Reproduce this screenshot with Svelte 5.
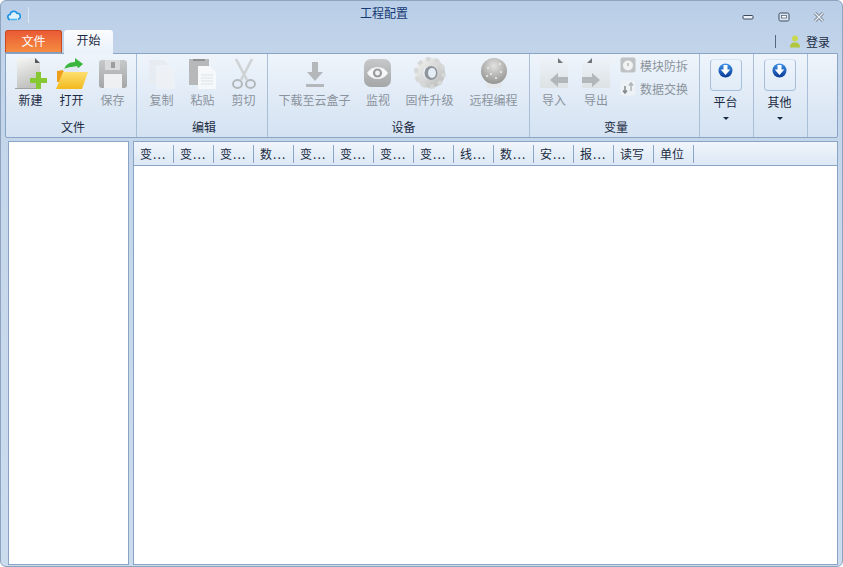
<script>
  const columns = [
    { name: '变', cut: true },
    { name: '变', cut: true },
    { name: '变', cut: true },
    { name: '数', cut: true },
    { name: '变', cut: true },
    { name: '变', cut: true },
    { name: '变', cut: true },
    { name: '变', cut: true },
    { name: '线', cut: true },
    { name: '数', cut: true },
    { name: '安', cut: true },
    { name: '报', cut: true },
    { name: '读写', cut: false },
    { name: '单位', cut: false }
  ]
</script>

<svg class="defs" width="0" height="0" aria-hidden="true">
  <defs>
    <linearGradient id="paper" x1="0" y1="0" x2="0.3" y2="1">
      <stop offset="0" stop-color="#f6f6f5" />
      <stop offset="1" stop-color="#c2c3c1" />
    </linearGradient>
    <linearGradient id="paperFaint" x1="0" y1="0" x2="0" y2="1">
      <stop offset="0" stop-color="#eef3f9" />
      <stop offset="1" stop-color="#dde2e4" />
    </linearGradient>
    <linearGradient id="folder" x1="0" y1="0" x2="0" y2="1">
      <stop offset="0" stop-color="#fde070" />
      <stop offset="1" stop-color="#f2b91e" />
    </linearGradient>
    <linearGradient id="grey" x1="0" y1="0" x2="0" y2="1">
      <stop offset="0" stop-color="#c6c8ca" />
      <stop offset="1" stop-color="#a4a6a8" />
    </linearGradient>
    <radialGradient id="ball" cx="0.5" cy="0.3" r="0.75">
      <stop offset="0" stop-color="#e2e2e0" />
      <stop offset="1" stop-color="#8d8d8b" />
    </radialGradient>
    <linearGradient id="gear" x1="0" y1="0" x2="1" y2="1">
      <stop offset="0" stop-color="#eeeeec" />
      <stop offset="1" stop-color="#bfc1c1" />
    </linearGradient>
    <linearGradient id="roundBlue" x1="0" y1="0" x2="0" y2="1">
      <stop offset="0" stop-color="#3f93ea" />
      <stop offset="1" stop-color="#0a3a94" />
    </linearGradient>
  </defs>
</svg>

{#snippet sheet(arrow)}
  <svg width="30" height="34" viewBox="0 0 30 34">
    {#if arrow === 'left'}
      <path d="M1 1h18l10 6v24H1z" fill="url(#paperFaint)" />
      <path d="M19 1l5 5h-5z" fill="#73777b" />
      <path d="M11 23l8-7v4h10v6H19v4z" fill="#b3b7b9" />
    {:else}
      <path d="M29 1H11L1 7v24h28z" fill="url(#paperFaint)" />
      <path d="M11 1L6 6h5z" fill="#73777b" />
      <path d="M19 23l-8-7v4H1v6h10v4z" fill="#b3b7b9" />
    {/if}
  </svg>
{/snippet}

{#snippet roundArrow()}
  <svg width="15" height="15" viewBox="0 0 15 15">
    <circle cx="7.5" cy="7.5" r="7" fill="url(#roundBlue)" />
    <path d="M5.500 2h4v4.500h2.800l-4.800 5.500-4.800-5.500h2.800z" fill="#fff" />
  </svg>
{/snippet}

<div class="window">
  <header class="titlebar">
    <div class="title-left">
      <svg width="14" height="12" viewBox="0 0 14 12">
        <path d="M3.500 10.500a2.500 2.500 0 0 1-.3-5 3.600 3.600 0 0 1 6.800-1.200 3 3 0 0 1 1 5.900" fill="#dff1fb" stroke="#1c93e0" stroke-width="1.600" />
        <path d="M4 10.500h6" stroke="#47b5ee" stroke-width="1.600" />
      </svg>
      <span class="title-sep"></span>
    </div>
    <div class="title">工程配置</div>
    <div class="controls">
      <svg width="12" height="8" viewBox="0 0 12 8"><rect x="1" y="2.500" width="10" height="3.500" rx="1" fill="#eef3f9" stroke="#3c4a5c" /></svg>
      <svg width="12" height="10" viewBox="0 0 12 10"><rect x="1" y="1" width="10" height="8" rx="1.500" fill="#d9e5f2" stroke="#3c4a5c" /><rect x="3.500" y="3.500" width="5" height="2.500" fill="#fff" stroke="#5b6a7c" stroke-width=".8" /></svg>
      <svg class="close" width="12" height="10" viewBox="0 0 12 10"><path d="M2 1l8 8M10 1L2 9" stroke="#6f7b89" stroke-width="3" /><path d="M2 1l8 8M10 1L2 9" stroke="#eef3f8" stroke-width="1.300" /></svg>
    </div>
  </header>

  <div class="tabs">
    <div class="tab-file">文件</div>
    <div class="tab-start">开始</div>
    <div class="login">
      <span class="login-sep"></span>
      <svg width="12" height="13" viewBox="0 0 12 13">
        <circle cx="6" cy="3.600" r="3" fill="#c9d852" />
        <path d="M1 12.500c0-4 2.200-5 5-5s5 1 5 5z" fill="#b2c63c" />
      </svg>
      <span>登录</span>
    </div>
  </div>

  <section class="ribbon">
    <div class="group g-file">
      <div class="items">
        <div class="btn">
          <svg width="34" height="34" viewBox="0 0 34 34">
            <path d="M3 1h18l5 5v25H3z" fill="url(#paper)" />
            <path d="M21 1l5 5h-5z" fill="#55585c" />
            <path d="M1 31h26v1H1z" fill="#a2a4a2" />
            <path d="M16 21h6v-6h5v6h6v5h-6v6h-5v-6h-6z" fill="#86c832" />
          </svg>
          <span>新建</span>
        </div>
        <div class="btn">
          <svg width="34" height="34" viewBox="0 0 34 34">
            <path d="M9 13c1-5 5-8 11-8V1l8 6-8 7v-4c-4 0-8 0-11 3z" fill="#3ab63c" />
            <path d="M2 14l6-1 2 2v10H2z" fill="#ef9e1c" />
            <path d="M7 12l15-3 3 6H9z" fill="#e3e9f0" />
            <path d="M8 15h25l-6 17H1z" fill="url(#folder)" />
          </svg>
          <span>打开</span>
        </div>
        <div class="btn off">
          <svg width="30" height="34" viewBox="0 0 30 34">
            <rect x="1" y="3" width="28" height="28" rx="3" fill="url(#grey)" />
            <rect x="7" y="3" width="15" height="10" fill="#d8dadb" />
            <rect x="13" y="5" width="4" height="6" fill="#9b9d9f" />
            <rect x="6" y="17" width="18" height="14" fill="#eef0f1" />
          </svg>
          <span>保存</span>
        </div>
      </div>
      <div class="group-name">文件</div>
    </div>

    <div class="group g-edit">
      <div class="items">
        <div class="btn off">
          <svg width="30" height="34" viewBox="0 0 30 34">
            <path d="M2 3h15l4 4v20H2z" fill="#e6ecf2" />
            <path d="M9 8h13l6 6v18H9z" fill="#edf1f6" />
          </svg>
          <span>复制</span>
        </div>
        <div class="btn off">
          <svg width="30" height="34" viewBox="0 0 30 34">
            <path d="M1 2h20v26H1z" fill="#b6b8ba" />
            <path d="M5 2h12v2H5z" fill="#8f9193" />
            <path d="M10 9h12l6 6v17H10z" fill="#f6f8fa" />
            <path d="M13 18h12M13 21h12M13 24h12M13 27h12" stroke="#dfe3e7" />
          </svg>
          <span>粘贴</span>
        </div>
        <div class="btn off">
          <svg width="26" height="34" viewBox="0 0 26 34">
            <path d="M5 2l11 21M21 2L10 23" stroke="#ced2d5" stroke-width="2.600" fill="none" />
            <ellipse cx="6.500" cy="27" rx="4.500" ry="4" fill="none" stroke="#b3b8bb" stroke-width="2" />
            <ellipse cx="19.500" cy="27" rx="4.500" ry="4" fill="none" stroke="#b3b8bb" stroke-width="2" />
          </svg>
          <span>剪切</span>
        </div>
      </div>
      <div class="group-name">编辑</div>
    </div>

    <div class="group g-device">
      <div class="items">
        <div class="btn wide">
          <svg width="20" height="34" viewBox="0 0 20 34">
            <path d="M7 5h6v10h5l-8 9-8-9h5z" fill="#b4b8ba" />
            <rect x="1" y="27" width="18" height="3" fill="#b4b8ba" />
          </svg>
          <span>下载至云盒子</span>
        </div>
        <div class="btn view">
          <svg width="30" height="34" viewBox="0 0 30 34">
            <rect x="1" y="2" width="27" height="28" rx="7" fill="url(#grey)" />
            <path d="M4 16c5-8 16-8 21 0-5 8-16 8-21 0z" fill="#f7f7f7" />
            <circle cx="14.500" cy="16" r="4.600" fill="#9b9c9e" />
            <circle cx="14.500" cy="16" r="2.400" fill="#f2f2f2" />
          </svg>
          <span>监视</span>
        </div>
        <div class="btn firmware">
          <svg width="34" height="34" viewBox="0 0 34 34">
            <circle cx="17" cy="16" r="11" fill="none" stroke="url(#gear)" stroke-width="8" />
            <circle cx="17" cy="16" r="14" fill="none" stroke="#d6d8d8" stroke-width="4" stroke-dasharray="4.400 4.400" />
            <ellipse cx="18" cy="16" rx="6.500" ry="7" fill="#8f959a" />
            <ellipse cx="19" cy="16" rx="4" ry="5" fill="#e4ecf5" />
          </svg>
          <span>固件升级</span>
        </div>
        <div class="btn remote">
          <svg width="28" height="34" viewBox="0 0 28 34">
            <path d="M6 24h16l-1 7H7z" fill="#e4e8ec" />
            <circle cx="14" cy="14" r="13" fill="url(#ball)" />
            <path d="M7 11h2M19 7h2M10 17h2M20 15h2M15 21h2M6 19h2" stroke="#eeeeec" stroke-width="1.400" />
          </svg>
          <span>远程编程</span>
        </div>
      </div>
      <div class="group-name">设备</div>
    </div>

    <div class="group g-var">
      <div class="items">
        <div class="btn off narrow">{@render sheet('left')}<span>导入</span></div>
        <div class="btn off narrow">{@render sheet('right')}<span>导出</span></div>
        <div class="small-col">
          <div class="small">
            <svg width="16" height="16" viewBox="0 0 16 16">
              <rect x="0.500" y="0.500" width="15" height="15" rx="2" fill="#bfc2c4" />
              <circle cx="8" cy="8.500" r="5" fill="#f1f2f2" />
              <path d="M8 6v3" stroke="#9a9c9e" />
            </svg>
            <span>模块防拆</span>
          </div>
          <div class="small">
            <svg width="16" height="16" viewBox="0 0 16 16">
              <rect x="0.500" y="0.500" width="15" height="15" rx="3" fill="#eef2f6" />
              <path d="M5 6v7M3 10.500l2 2.500 2-2.500" stroke="#85888a" stroke-width="1.500" fill="none" />
              <path d="M11 11V3M9 5.500L11 3l2 2.500" stroke="#b2b5b7" stroke-width="1.500" fill="none" />
            </svg>
            <span>数据交换</span>
          </div>
        </div>
      </div>
      <div class="group-name">变量</div>
    </div>

    <div class="group g-drop">
      <div class="drop">
        <div class="drop-icon">{@render roundArrow()}</div>
        <span>平台</span>
        <i class="caret"></i>
      </div>
    </div>

    <div class="group g-drop">
      <div class="drop">
        <div class="drop-icon">{@render roundArrow()}</div>
        <span>其他</span>
        <i class="caret"></i>
      </div>
    </div>
  </section>

  <main class="body">
    <aside class="tree"></aside>
    <div class="grid">
      <div class="grid-head">
        {#each columns as col}
          <div class="col">{col.name}{#if col.cut}<span class="dots">...</span>{/if}</div>
        {/each}
      </div>
    </div>
  </main>
</div>

<style>
  :global(body) {
    margin: 0;
    background: #fff;
  }

  .defs {
    position: absolute;
  }

  .window {
    box-sizing: border-box;
    width: 843px;
    height: 567px;
    display: flex;
    flex-direction: column;
    background: linear-gradient(#b9cee7 0, #c3d5ea 60px, #cbdcef 100%);
    border: 1px solid #8ea3bd;
    border-radius: 6px;
    font-family: "Noto Sans CJK SC", "Liberation Sans", sans-serif;
    font-size: 12px;
    color: #1b2b42;
    overflow: hidden;
  }

  .titlebar {
    height: 28px;
    flex: none;
    display: flex;
    align-items: center;
    position: relative;
    padding: 0 17px 0 6px;
  }

  .title-left {
    display: flex;
    align-items: center;
    gap: 7px;
  }

  .title-sep {
    width: 1px;
    height: 16px;
    background: #dbe7f4;
  }

  .title {
    position: absolute;
    left: 359px;
    top: 3px;
    color: #153a74;
    line-height: 18px;
  }

  .controls {
    margin-left: auto;
    display: flex;
    align-items: center;
    gap: 24px;
    padding-top: 3px;
  }

  .close {
    margin-left: -1px;
  }

  .tabs {
    height: 24px;
    flex: none;
    display: flex;
    align-items: flex-end;
    padding: 0 12px 0 4px;
    position: relative;
    z-index: 1;
  }

  .tab-file {
    box-sizing: border-box;
    width: 57px;
    height: 23px;
    text-align: center;
    line-height: 19px;
    color: #fff;
    background: linear-gradient(#ea5a36, #f58c40);
    border: 1px solid #c9481f;
    border-bottom-color: #7f9cc0;
    border-radius: 3px 3px 0 0;
  }

  .tab-start {
    box-sizing: border-box;
    width: 49px;
    height: 24px;
    margin: 0 0 -1px 2px;
    text-align: center;
    line-height: 20px;
    background: linear-gradient(#fbfdff, #e9f1fa);
    border-radius: 3px 3px 0 0;
  }

  .login {
    margin-left: auto;
    display: flex;
    align-items: center;
    height: 24px;
  }

  .login-sep {
    width: 1px;
    height: 13px;
    background: #56687e;
    margin-right: 13px;
  }

  .login svg {
    margin-right: 5px;
  }

  .ribbon {
    box-sizing: border-box;
    height: 85px;
    flex: none;
    margin: 0 4px;
    display: flex;
    background: linear-gradient(#eef4fb, #d4e2f2);
    border: 1px solid #8aa4c5;
    border-radius: 0 0 2px 2px;
  }

  .group {
    display: flex;
    flex-direction: column;
    border-right: 1px solid #a9bfd9;
    box-sizing: border-box;
  }

  .g-file { width: 131px; padding-left: 4px; }
  .g-edit { width: 131px; padding-left: 4px; }
  .g-device { width: 262px; padding-left: 10px; }
  .g-var { width: 170px; padding-left: 3px; }
  .g-drop { width: 54px; }

  .items {
    display: flex;
    height: 64px;
  }

  .group-name {
    height: 19px;
    text-align: center;
    line-height: 17px;
  }

  .btn {
    width: 41px;
    display: flex;
    flex-direction: column;
    align-items: center;
    padding-top: 3px;
    box-sizing: border-box;
  }

  .btn svg {
    height: 34px;
    display: block;
  }

  .btn span {
    line-height: 18px;
    white-space: nowrap;
  }

  .off span,
  .wide span,
  .view span,
  .firmware span,
  .remote span,
  .small span {
    color: #8b939c;
  }

  .off svg,
  .firmware svg,
  .remote svg,
  .small svg {
    filter: blur(0.4px);
  }

  .wide { width: 73px; margin-right: 13px; }
  .view { width: 28px; margin-right: 13px; }
  .firmware { width: 49px; margin-right: 15px; }
  .remote { width: 49px; }
  .narrow { width: 42px; }

  .small-col {
    display: flex;
    flex-direction: column;
    gap: 7px;
    padding: 3px 0 0 3px;
  }

  .small {
    display: flex;
    align-items: center;
    gap: 4px;
    height: 16px;
    white-space: nowrap;
  }

  .drop {
    display: flex;
    flex-direction: column;
    align-items: center;
    padding: 5px 2px 0 0;
  }

  .drop-icon {
    box-sizing: border-box;
    width: 32px;
    height: 32px;
    border: 1px solid #a9bfd9;
    border-top-color: #d6e3f1;
    border-radius: 4px;
    background: linear-gradient(#eef4fb, #e0ebf7);
    display: flex;
    justify-content: center;
    padding-top: 3px;
  }

  .drop span {
    line-height: 18px;
    margin-top: 2px;
  }

  .caret {
    width: 0;
    height: 0;
    border: 3px solid transparent;
    border-top: 3px solid #1b2b42;
    border-bottom: 0;
    margin-top: 6px;
  }

  .body {
    flex: 1;
    min-height: 0;
    display: flex;
    gap: 4px;
    padding: 3px 4px 1px 7px;
  }

  .tree {
    box-sizing: border-box;
    width: 121px;
    background: #fff;
    border: 1px solid #8aa4c5;
  }

  .grid {
    box-sizing: border-box;
    flex: 1;
    background: #fff;
    border: 1px solid #8aa4c5;
  }

  .grid-head {
    display: flex;
    height: 24px;
    box-sizing: border-box;
    background: linear-gradient(#f0f5fb, #dce8f5);
    border-bottom: 1px solid #8aa4c5;
  }

  .col {
    box-sizing: border-box;
    width: 40px;
    padding-left: 6px;
    line-height: 23px;
    white-space: nowrap;
    position: relative;
  }

  .dots {
    letter-spacing: 1.2px;
    margin-left: 1px;
  }

  .col::after {
    content: "";
    position: absolute;
    right: 0;
    top: 3px;
    bottom: 2px;
    width: 1px;
    background: #8aa4c5;
  }
</style>
